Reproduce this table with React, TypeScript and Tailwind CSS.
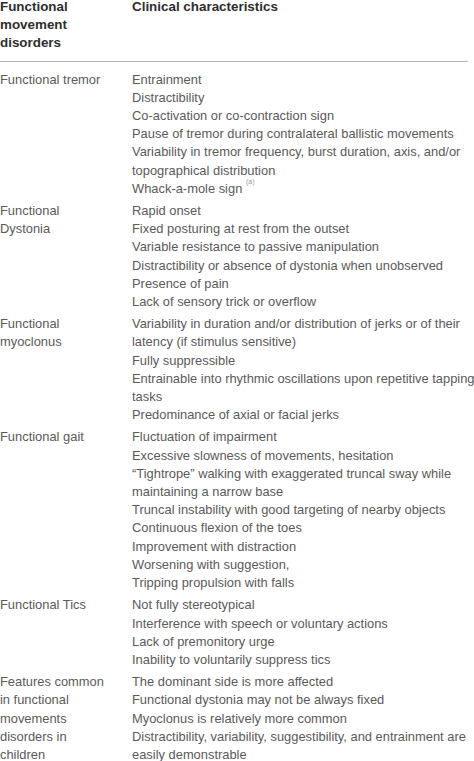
const rows: { label: string[]; items: React.ReactNode[] }[] = [
  {
    label: ["Functional tremor"],
    items: [
      "Entrainment",
      "Distractibility",
      "Co-activation or co-contraction sign",
      "Pause of tremor during contralateral ballistic movements",
      "Variability in tremor frequency, burst duration, axis, and/or",
      "topographical distribution",
      <>
        Whack-a-mole sign{" "}
        <sup className="text-[7px] text-[#999] align-[5px]">(a)</sup>
      </>,
    ],
  },
  {
    label: ["Functional", "Dystonia"],
    items: [
      "Rapid onset",
      "Fixed posturing at rest from the outset",
      "Variable resistance to passive manipulation",
      "Distractibility or absence of dystonia when unobserved",
      "Presence of pain",
      "Lack of sensory trick or overflow",
    ],
  },
  {
    label: ["Functional", "myoclonus"],
    items: [
      "Variability in duration and/or distribution of jerks or of their",
      "latency (if stimulus sensitive)",
      "Fully suppressible",
      "Entrainable into rhythmic oscillations upon repetitive tapping",
      "tasks",
      "Predominance of axial or facial jerks",
    ],
  },
  {
    label: ["Functional gait"],
    items: [
      "Fluctuation of impairment",
      "Excessive slowness of movements, hesitation",
      "\u201CTightrope\u201D walking with exaggerated truncal sway while",
      "maintaining a narrow base",
      "Truncal instability with good targeting of nearby objects",
      "Continuous flexion of the toes",
      "Improvement with distraction",
      "Worsening with suggestion,",
      "Tripping propulsion with falls",
    ],
  },
  {
    label: ["Functional Tics"],
    items: [
      "Not fully stereotypical",
      "Interference with speech or voluntary actions",
      "Lack of premonitory urge",
      "Inability to voluntarily suppress tics",
    ],
  },
  {
    label: ["Features common", "in functional", "movements", "disorders in", "children"],
    items: [
      "The dominant side is more affected",
      "Functional dystonia may not be always fixed",
      "Myoclonus is relatively more common",
      "Distractibility, variability, suggestibility, and entrainment are",
      "easily demonstrable",
    ],
  },
];

export default function App() {
  return (
    <div
      className="w-[474px] h-[761px] overflow-hidden bg-white text-[12.9px] leading-[18.2px]"
      style={{ fontFamily: '"Liberation Sans", Arial, sans-serif' }}
    >
      {/* header */}
      <div className="-mt-[2px] w-[468px] grid grid-cols-[132px_1fr] pb-[8px] border-b-[1.5px] border-[#b5b5b5] font-bold text-[13.4px] text-[#2e2e2e]">
        <div>
          <div>Functional</div>
          <div>movement</div>
          <div>disorders</div>
        </div>
        <div>Clinical characteristics</div>
      </div>

      {/* body */}
      <div className="pt-[7px] text-[#5a5a5a]">
        {rows.map((row, i) => (
          <div key={i} className="grid grid-cols-[132px_1fr] py-[2px]">
            <div>
              {row.label.map((l, j) => (
                <div key={j} className="whitespace-nowrap">
                  {l}
                </div>
              ))}
            </div>
            <div>
              {row.items.map((t, j) => (
                <div key={j} className="whitespace-nowrap">
                  {t}
                </div>
              ))}
            </div>
          </div>
        ))}
      </div>
    </div>
  );
}
